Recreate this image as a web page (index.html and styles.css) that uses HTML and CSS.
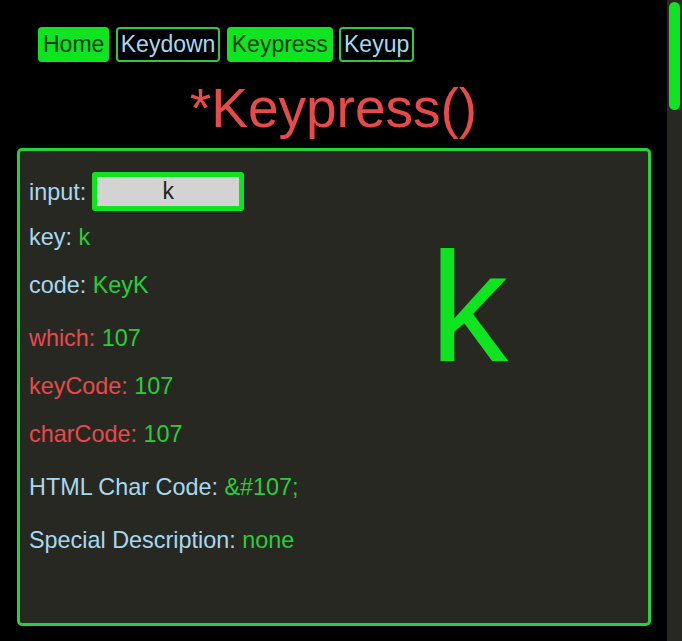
FILE: index.html
```html
<!DOCTYPE html>
<html lang="en">
<head>
<meta charset="utf-8">
<title>Keypress()</title>
<link rel="stylesheet" href="styles.css">
</head>
<body>
<nav class="nav">
  <a class="btn btn-fill" href="#">Home</a>
  <a class="btn btn-outline" href="#">Keydown</a>
  <a class="btn btn-fill" href="#">Keypress</a>
  <a class="btn btn-outline" href="#">Keyup</a>
</nav>
<h1 class="title">*Keypress()</h1>
<section class="panel">
  <div class="info">
    <div class="row row-input"><span class="lbl">input:</span><input class="field" type="text" value="k"></div>
    <div class="row gap-first"><span class="lbl">key:</span> <span class="val">k</span></div>
    <div class="row gap-md"><span class="lbl">code:</span> <span class="val">KeyK</span></div>
    <div class="row gap-lg"><span class="lbl red">which:</span> <span class="val">107</span></div>
    <div class="row gap-md"><span class="lbl red">keyCode:</span> <span class="val">107</span></div>
    <div class="row gap-md"><span class="lbl red">charCode:</span> <span class="val">107</span></div>
    <div class="row gap-lg"><span class="lbl">HTML Char Code:</span> <span class="val">&amp;#107;</span></div>
    <div class="row gap-lg"><span class="lbl">Special Description:</span> <span class="val">none</span></div>
  </div>
  <div class="bigkey">k</div>
</section>
<div class="scrollbar" aria-hidden="true"><div class="scrollbar-thumb"></div></div>
</body>
</html>
```
FILE: styles.css
```css
body {
  margin: 0 15px 0 0;
  background: #000;
  font-family: "Liberation Sans", Arial, sans-serif;
}

.scrollbar {
  position: fixed;
  top: 0;
  right: 0;
  width: 15px;
  height: 100vh;
  background: #272822;
}

.scrollbar-thumb {
  width: 11px;
  height: 108px;
  margin: 2px 0 0 2px;
  border-radius: 6px;
  background: #0ee41f;
}

.nav {
  padding: 27px 0 0 38px;
  font-size: 23px;
  line-height: 31px;
}

.btn {
  display: inline-block;
  padding: 0 3px;
  border: 2px solid #34c63f;
  border-radius: 4px;
  text-decoration: none;
}

.btn-fill {
  background: #0ee41f;
  border-color: #0ee41f;
  color: #133d13;
}

.btn-outline {
  background: #000;
  color: #a8d8f0;
}

.title {
  margin: 16px 0 9px;
  font-size: 55px;
  font-weight: normal;
  line-height: 61px;
  text-align: center;
  color: #e84a4a;
}

.panel {
  box-sizing: border-box;
  height: 478px;
  margin: 0 16px 0 17px;
  padding: 21px 9px 0;
  border: 3px solid #27d13a;
  border-radius: 5px;
  background: #272822;
  display: grid;
  grid-template-columns: 401px auto;
  align-items: start;
}

.info {
  font-size: 23.4px;
  line-height: 26px;
}

.row {
  white-space: nowrap;
}

.row-input {
  display: flex;
  align-items: center;
  gap: 6px;
}

.gap-first { margin-top: 13px; }
.gap-md { margin-top: 22px; }
.gap-lg { margin-top: 27px; }

.lbl { color: #a8d8f0; }
.lbl.red { color: #e84a4a; }
.val { color: #2bcc3a; }

.field {
  box-sizing: border-box;
  width: 152px;
  height: 39px;
  padding: 0;
  border: 5px solid #0ee41f;
  border-radius: 3px;
  background: #d3d3d3;
  font-family: "Liberation Sans", Arial, sans-serif;
  font-size: 23px;
  color: #222;
  text-align: center;
  outline: none;
}

.bigkey {
  margin-top: 57px;
  font-size: 156px;
  line-height: 156px;
  color: #0ee41f;
}
```
